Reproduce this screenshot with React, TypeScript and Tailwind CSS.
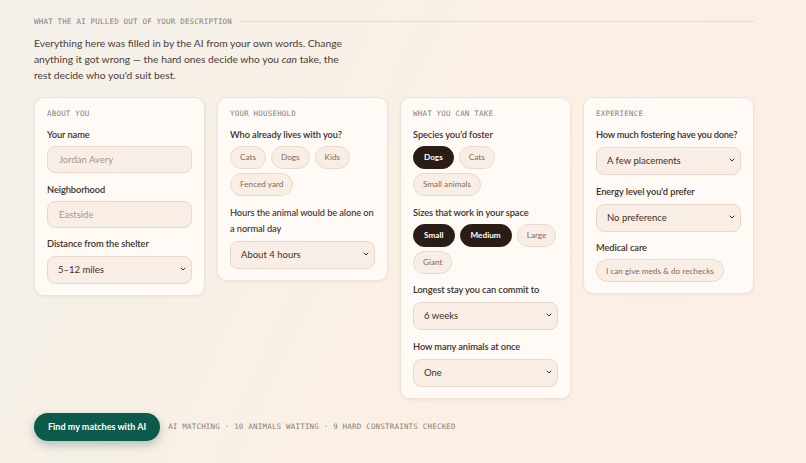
import { ChevronDown } from 'lucide-react'

const mono = "font-['DejaVu_Sans_Mono',monospace] text-[7.5px] leading-[9px] tracking-[0.2px] uppercase text-[#8c7f77]"

function Label({ children }: { children: React.ReactNode }) {
  return <div className="text-[9.3px] font-semibold tracking-[-0.1px] text-[#3d302a] leading-[16px]">{children}</div>
}

function TextInput({ placeholder }: { placeholder: string }) {
  return (
    <input
      placeholder={placeholder}
      className="h-[27px] w-full rounded-[8px] border border-[#ead9cb] bg-[#f9eee5] px-[11px] text-[9.5px] text-[#3d302a] placeholder:text-[#a8968b] outline-none"
    />
  )
}

function Select({ value }: { value: string }) {
  return (
    <div className="relative">
      <select
        defaultValue={value}
        className="h-[28px] w-full appearance-none rounded-[8px] border border-[#ead9cb] bg-[#f9eee5] px-[10px] text-[9.5px] text-[#3d302a] outline-none"
      >
        <option>{value}</option>
      </select>
      <ChevronDown className="pointer-events-none absolute right-[5px] top-[10px] h-[8px] w-[8px] text-[#3d302a]" strokeWidth={3} />
    </div>
  )
}

function Chip({ label, on }: { label: string; on?: boolean }) {
  return (
    <span
      className={
        on
          ? 'flex h-[23px] items-center rounded-full border border-[#2a1d17] bg-[#2a1d17] px-[10px] text-[8.2px] font-bold text-white'
          : 'flex h-[23px] items-center rounded-full border border-[#ead9cb] bg-[#f9eee5] px-[9px] text-[8.2px] text-[#7b6b61]'
      }
    >
      {label}
    </span>
  )
}

function Card({ title, children }: { title: string; children: React.ReactNode }) {
  return (
    <div className="rounded-[10px] border border-[#efe3d8] bg-[#fffaf5] px-3 pb-[11px] pt-[11px] shadow-[0_1px_3px_rgba(120,80,50,0.08)]">
      <div className={mono}>{title}</div>
      <div className="mt-[9px] flex flex-col gap-[8.5px]">{children}</div>
    </div>
  )
}

function Field({ label, children }: { label: React.ReactNode; children: React.ReactNode }) {
  return (
    <div className="flex flex-col gap-[3px]">
      <Label>{label}</Label>
      {children}
    </div>
  )
}

function Chips({ children }: { children: React.ReactNode }) {
  return <div className="flex flex-wrap gap-x-[5px] gap-y-[4px]">{children}</div>
}

export default function App() {
  return (
    <div className="min-h-[463px] w-full bg-[linear-gradient(115deg,#f3f0ea_0%,#fbf0e4_55%,#fcefe6_100%)] font-['Lato',sans-serif]">
      <div className="ml-[34px] w-[720px] pt-[17px]">
        <div className="flex items-center gap-[9px]">
          <span className={mono}>What the AI pulled out of your description</span>
          <div className="h-px flex-1 bg-[#e6dcd2]" />
        </div>
        <p className="mt-[9px] max-w-[320px] text-[10.3px] leading-[16px] text-[#4a3d36]">
          Everything here was filled in by the AI from your own words. Change anything it got wrong — the hard ones
          decide who you <em>can</em> take, the rest decide who you'd suit best.
        </p>

        <div className="mt-[14px] grid grid-cols-4 items-start gap-[12px]">
          <Card title="About you">
            <Field label="Your name">
              <TextInput placeholder="Jordan Avery" />
            </Field>
            <Field label="Neighborhood">
              <TextInput placeholder="Eastside" />
            </Field>
            <Field label="Distance from the shelter">
              <Select value="5–12 miles" />
            </Field>
          </Card>

          <Card title="Your household">
            <Field label="Who already lives with you?">
              <Chips>
                <Chip label="Cats" />
                <Chip label="Dogs" />
                <Chip label="Kids" />
                <Chip label="Fenced yard" />
              </Chips>
            </Field>
            <Field label={<span className="font-medium">Hours the animal would be alone on a normal day</span>}>
              <Select value="About 4 hours" />
            </Field>
          </Card>

          <Card title="What you can take">
            <Field label="Species you'd foster">
              <Chips>
                <Chip label="Dogs" on />
                <Chip label="Cats" />
                <Chip label="Small animals" />
              </Chips>
            </Field>
            <Field label="Sizes that work in your space">
              <Chips>
                <Chip label="Small" on />
                <Chip label="Medium" on />
                <Chip label="Large" />
                <Chip label="Giant" />
              </Chips>
            </Field>
            <Field label="Longest stay you can commit to">
              <Select value="6 weeks" />
            </Field>
            <Field label="How many animals at once">
              <Select value="One" />
            </Field>
          </Card>

          <Card title="Experience">
            <Field label={<span className="whitespace-nowrap tracking-[-0.25px]">How much fostering have you done?</span>}>
              <Select value="A few placements" />
            </Field>
            <Field label="Energy level you'd prefer">
              <Select value="No preference" />
            </Field>
            <Field label="Medical care">
              <Chips>
                <Chip label="I can give meds & do rechecks" />
              </Chips>
            </Field>
          </Card>
        </div>

        <div className="mt-[14px] flex items-center gap-[8px]">
          <button className="h-[28px] rounded-full bg-[#0e5a4a] px-[14px] text-[9px] font-bold text-white shadow-[0_4px_10px_rgba(14,90,74,0.3)]">
            Find my matches with AI
          </button>
          <span className={mono}>AI matching · 10 animals waiting · 9 hard constraints checked</span>
        </div>
      </div>
    </div>
  )
}
